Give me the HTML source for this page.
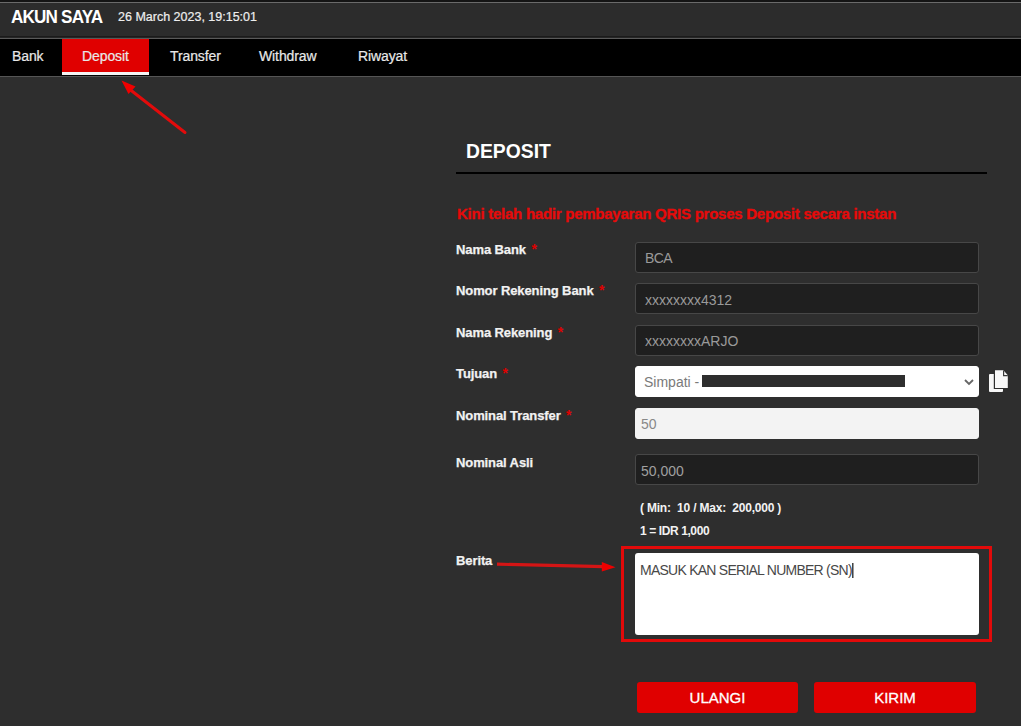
<!DOCTYPE html>
<html><head><meta charset="utf-8">
<style>
*{margin:0;padding:0;box-sizing:border-box}
html,body{width:1021px;height:726px;overflow:hidden;background:#2e2e2e;font-family:"Liberation Sans",sans-serif}
.a{position:absolute;white-space:nowrap}
#topstrip{left:0;top:0;width:1021px;height:2px;background:#141414}
#topline{left:0;top:2px;width:1021px;height:1px;background:#6a6a6a}
#hdr{left:0;top:3px;width:1021px;height:33px;background:#2c2c2c}
#hdrline1{left:0;top:36px;width:1021px;height:1px;background:#1b1b1b;box-shadow:0 1px 0 #262626}
#hdrline2{left:0;top:38px;width:1021px;height:1px;background:#5a5a5a}
#nav{left:0;top:39px;width:1021px;height:37px;background:#000}
#navline{left:0;top:76px;width:1021px;height:1px;background:#555}
#tab{left:62px;top:39px;width:87px;height:33px;background:#e00000}
#tabline{left:62px;top:72px;width:87px;height:3px;background:#f4f4f4}
.nav{font-size:14px;color:#e8e8e8;line-height:16px;top:48px;-webkit-text-stroke:0.2px #e8e8e8;letter-spacing:-0.1px}
.lbl{font-size:13px;font-weight:bold;color:#f2f2f2;line-height:16px;left:456px;letter-spacing:-0.1px;-webkit-text-stroke:0.25px #f2f2f2}
.ast{color:#e00000;font-size:14px;font-weight:bold;line-height:0;-webkit-text-stroke:0;margin-left:2px}
.inp{left:635px;width:344px;height:31px;border:1px solid #474747;border-radius:3px;background:#1f1f1f}
.itx{font-size:14px;color:#9a9a9a;line-height:16px}
.btn{top:682px;height:31px;background:#e00000;border-radius:3px;color:#fff;font-size:15px;font-weight:normal;-webkit-text-stroke:0.3px #fff;text-align:center;line-height:31px}
</style></head><body>
<div class="a" id="topstrip"></div>
<div class="a" id="topline"></div>
<div class="a" id="hdr"></div>
<div class="a" id="hdrline1"></div>
<div class="a" id="hdrline2"></div>
<div class="a" style="left:11px;top:5.5px;font-size:19px;font-weight:bold;color:#fff;line-height:22px;letter-spacing:-0.9px;transform:scaleX(0.9);transform-origin:0 0">AKUN SAYA</div>
<div class="a" style="left:118px;top:8.7px;font-size:12.5px;color:#eee;line-height:16px;-webkit-text-stroke:0.2px #eee">26 March 2023, 19:15:01</div>

<div class="a" id="nav"></div>
<div class="a" id="navline"></div>
<div class="a" id="tab"></div>
<div class="a" id="tabline"></div>
<div class="a nav" style="left:12px">Bank</div>
<div class="a nav" style="left:82px">Deposit</div>
<div class="a nav" style="left:170px">Transfer</div>
<div class="a nav" style="left:259px">Withdraw</div>
<div class="a nav" style="left:358px">Riwayat</div>

<div class="a" style="left:466px;top:139px;font-size:21px;font-weight:bold;color:#fff;line-height:24px;transform:scaleX(0.92);transform-origin:0 0">DEPOSIT</div>
<div class="a" style="left:456px;top:172px;width:531px;height:2px;background:#000"></div>
<div class="a" style="left:457px;top:205px;font-size:15px;font-weight:bold;color:#e60a0a;line-height:18px;letter-spacing:-0.25px;-webkit-text-stroke:0.3px #e60a0a">Kini telah hadir pembayaran QRIS proses Deposit secara instan</div>

<div class="a lbl" style="top:242px">Nama Bank <span class="ast">*</span></div>
<div class="a inp" style="top:242px"></div>
<div class="a itx" style="left:645px;top:249.5px;letter-spacing:-0.6px">BCA</div>

<div class="a lbl" style="top:283px">Nomor Rekening Bank <span class="ast">*</span></div>
<div class="a inp" style="top:283px"></div>
<div class="a itx" style="left:645px;top:292px">xxxxxxxx4312</div>

<div class="a lbl" style="top:325px">Nama Rekening <span class="ast">*</span></div>
<div class="a inp" style="top:325px"></div>
<div class="a itx" style="left:645px;top:333px">xxxxxxxxARJO</div>

<div class="a lbl" style="top:366px">Tujuan <span class="ast">*</span></div>
<div class="a inp" style="top:366px;background:#fff;border-color:#fff"></div>
<div class="a itx" style="left:644px;top:374px;color:#7a7a7a">Simpati - </div>
<div class="a" style="left:702px;top:375px;width:203px;height:12px;background:#2e2e2e"></div>

<div class="a lbl" style="top:408px">Nominal Transfer <span class="ast">*</span></div>
<div class="a inp" style="top:408px;background:#f3f3f3;border-color:#f3f3f3"></div>
<div class="a itx" style="left:641px;top:416px;color:#888">50</div>

<div class="a lbl" style="top:455px">Nominal Asli</div>
<div class="a inp" style="top:454px"></div>
<div class="a itx" style="left:641px;top:463px;color:#a0a0a0">50,000</div>

<div class="a" style="left:640px;top:501px;font-size:12px;font-weight:bold;color:#f2f2f2;line-height:14px;letter-spacing:-0.2px">( Min:&nbsp; 10 / Max:&nbsp; 200,000 )</div>
<div class="a" style="left:640px;top:524px;font-size:12px;font-weight:bold;color:#f2f2f2;line-height:14px;letter-spacing:-0.4px">1 = IDR 1,000</div>

<div class="a lbl" style="top:553px">Berita</div>
<div class="a" style="left:621px;top:546px;width:371px;height:96px;border:3px solid #e20a0a"></div>
<div class="a" style="left:635px;top:553px;width:344px;height:82px;background:#fff;border-radius:3px"></div>
<div class="a" style="left:640px;top:562px;font-size:14px;color:#484848;line-height:16px;letter-spacing:-0.75px">MASUK KAN SERIAL NUMBER (SN)</div>
<div class="a" style="left:852px;top:563px;width:1px;height:15px;background:#444;box-shadow:1px 0 0 #999"></div>

<div class="a btn" style="left:637px;width:161px">ULANGI</div>
<div class="a btn" style="left:814px;width:162px">KIRIM</div>
<svg class="a" style="left:0;top:0" width="1021" height="726" viewBox="0 0 1021 726">
<polyline points="965,380 969,384 973,380" fill="none" stroke="#666" stroke-width="1.8"/>
<rect x="989" y="374" width="14" height="18" rx="1" fill="#f6f6f6"/>
<path d="M993.8,369.2 H1003.9 L1008.9,374.6 V389.1 H993.8 Z" fill="#2e2e2e"/>
<path d="M995,370.3 H1003.4 L1007.8,375.2 V388 H995 Z" fill="#f8f8f8"/>
<path d="M1003.6,370.6 V375.6 H1007.8" fill="none" stroke="#3a3a3a" stroke-width="1.2"/>
<line x1="185" y1="132.5" x2="128" y2="88" stroke="#e20b0b" stroke-width="3" stroke-linecap="round"/>
<polygon points="121.5,80.5 135.5,86.5 128.5,94" fill="#f00000"/>
<line x1="497" y1="564.2" x2="604" y2="566.6" stroke="#d41515" stroke-width="3.2"/>
<polygon points="615.5,567.2 601.8,561.9 601.8,571.6" fill="#ee0000"/>
</svg>
</body></html>
